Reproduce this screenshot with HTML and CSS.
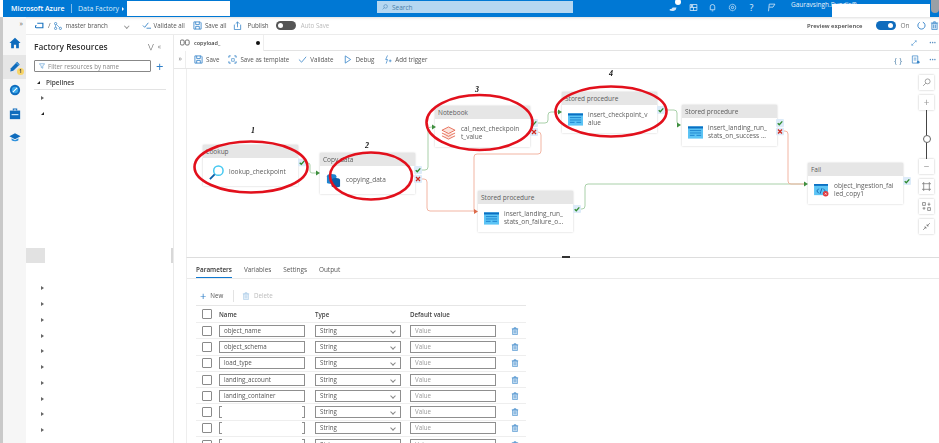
FILE: index.html
```html
<!DOCTYPE html>
<html lang="en">
<head>
    <meta charset="UTF-8">
    <title>Azure Data Factory - copyload</title>
    <link rel="stylesheet" href="styles.css">
</head>
<body>
    <!-- shared icons -->
    <svg class="defs" width="0" height="0">
        <symbol id="i-save" viewBox="0 0 10 10"><path d="M1 1h7l1 1v7H1zM3 1v3h4V1M3 9V6h4v3" fill="none" stroke="#2f7fc8" stroke-width=".9"/></symbol>
        <symbol id="i-trash" viewBox="0 0 10 10"><path d="M2 2.5h6v7H2zM1 2.2h8M4 2V.8h2V2M4 4v4M6 4v4" fill="#d6e8f7" stroke="#3a86c8" stroke-width=".8"/></symbol>
        <symbol id="i-sp" viewBox="0 0 16 13"><rect width="16" height="13" fill="#5cc4f5"/><rect width="16" height="2.2" fill="#0a6fc2"/><path d="M2 4.5h12M2 7h12M9 9.5h5M2 9.5h5" stroke="#0a6fc2" stroke-width=".8"/></symbol>
        <symbol id="ok" viewBox="0 0 8 8"><rect width="8" height="8" rx="1" fill="#dcebf9"/><path d="M1.7 4.2l1.6 1.6 3-3.4" fill="none" stroke="#2e8b2e" stroke-width="1.3"/></symbol>
        <symbol id="bad" viewBox="0 0 8 8"><rect width="8" height="8" rx="1" fill="#dcebf9"/><path d="M2 2l4 4M6 2l-4 4" fill="none" stroke="#d0281e" stroke-width="1.3"/></symbol>
    </svg>

    <header class="topbar">
        <span class="brand">Microsoft Azure</span>
        <span class="crumb">Data Factory</span>
        <span class="crumb-caret"></span>
        <span class="blank-name"></span>
        <div class="search">
            <svg class="search-icon" viewBox="0 0 10 10"><circle cx="6" cy="4" r="3" fill="none" stroke="#4d86b8"/><path d="M4 6L1 9" stroke="#4d86b8"/></svg>
            Search
        </div>
        <div class="top-icons">
            <span class="top-icon has-count">
                <svg viewBox="0 0 12 12"><path d="M1 10c2 1 6 1 8-1l1-3H5L3 8H1z" fill="#cfe4f7"/></svg>
                <b class="count"></b>
            </span>
            <span class="top-icon"><svg viewBox="0 0 12 12"><path d="M1.500 2h9v8h-9zM1.500 6h9M6 6v4" fill="none" stroke="#e4f0fb"/><rect x="2.500" y="3" width="3" height="2" fill="#e4f0fb"/></svg></span>
            <span class="top-icon"><svg viewBox="0 0 12 12"><path d="M3 9V5a3 3 0 016 0v4zM5 10.500h2" fill="none" stroke="#e4f0fb"/></svg></span>
            <span class="top-icon"><svg viewBox="0 0 12 12"><circle cx="6" cy="6" r="4.300" fill="none" stroke="#e4f0fb" stroke-width="1.100" stroke-dasharray="2 .6"/><circle cx="6" cy="6" r="1.600" fill="none" stroke="#e4f0fb"/></svg></span>
            <span class="top-icon help">?</span>
            <span class="top-icon"><svg viewBox="0 0 12 12"><path d="M3 1.500h7.500L8 5.500h-5M3 1.500L2 11" fill="none" stroke="#e4f0fb"/></svg></span>
        </div>
        <span class="user">Gauravsingh.Pundir@</span>
        <span class="blank-user"></span>
        <span class="avatar"></span>
    </header>

    <div class="app">
        <nav class="rail">
            <span class="rail-expand">&raquo;</span>
            <span class="rail-item">
                <svg viewBox="0 0 14 14"><path d="M7 1L.5 7H2.500v6h3.200V9h2.600v4h3.200V7h2z" fill="#0f6cbd"/></svg>
            </span>
            <span class="rail-item active">
                <svg viewBox="0 0 14 14"><path d="M9.500 1l3 3-7.500 7.500-3.500.7.700-3.700z" fill="#0f6cbd"/><path d="M8.500 2l3 3" stroke="#7cc4f0"/></svg>
                <b class="rail-badge">1</b>
            </span>
            <span class="rail-item">
                <svg viewBox="0 0 14 14"><circle cx="7" cy="7" r="6" fill="#0f6cbd"/><circle cx="7" cy="7" r="3.800" fill="#39a5e8"/><path d="M4.500 9.500L9.500 4.500" stroke="#fff" stroke-width="1.200"/></svg>
            </span>
            <span class="rail-item">
                <svg viewBox="0 0 14 14"><path d="M5 3V1.200h4V3" fill="none" stroke="#0f6cbd" stroke-width="1.200"/><rect x="1" y="3" width="12" height="10" fill="#0f6cbd"/><rect x="3" y="7" width="8" height="1.400" fill="#bfe0f7"/></svg>
            </span>
            <span class="rail-item">
                <svg viewBox="0 0 14 14"><path d="M7 2.500L.5 6 7 9.500 13.500 6z" fill="#0f6cbd"/><path d="M3 8.500v2.200c2 1.600 6 1.600 8 0V8.500L7 10.800z" fill="#2a8fdc"/></svg>
            </span>
        </nav>

        <div class="workspace">
            <div class="toolbar">
                <svg class="tb-icon factory" viewBox="0 0 12 12"><path d="M3 3h7.500v6H2a1.500 1.500 0 010-3" fill="none" stroke="#1a73c0" stroke-width="1.500"/></svg>
                <span class="slash">/</span>
                <svg class="tb-icon branch" viewBox="0 0 10 10"><circle cx="2" cy="2" r="1.400" fill="none" stroke="#3a86c8"/><circle cx="2" cy="8" r="1.400" fill="none" stroke="#3a86c8"/><circle cx="8" cy="8" r="1.400" fill="none" stroke="#3a86c8"/><path d="M2 3.500v3M3 3l4 4" stroke="#3a86c8" stroke-width=".8"/></svg>
                <span class="branch-name">master branch</span>
                <span class="chev"></span>
                <svg class="tb-icon validate" viewBox="0 0 10 10"><path d="M1 5l2 2 4-5M5 8h5" fill="none" stroke="#3a86c8"/></svg>
                <span class="tb-label">Validate all</span>
                <svg class="tb-icon save-all"><use href="#i-save"/></svg>
                <span class="tb-label">Save all</span>
                <svg class="tb-icon publish" viewBox="0 0 10 10"><path d="M1.500 4v5.500h7V4M5 7V1M3 3l2-2 2 2" fill="none" stroke="#3a86c8" stroke-width=".9"/></svg>
                <span class="tb-label">Publish</span>
                <span class="toggle off"></span>
                <span class="tb-label muted">Auto Save</span>
                <span class="preview">Preview experience</span>
                <span class="toggle on"></span>
                <span class="on-label">On</span>
                <svg class="tb-icon refresh" viewBox="0 0 10 10"><path d="M6.500 1.300A4 4 0 113 1.500" fill="none" stroke="#2f7fc8"/></svg>
                <svg class="tb-icon trash-top"><use href="#i-trash"/></svg>
            </div>

            <div class="work-area">
                <aside class="sidebar">
                    <div class="side-title">
                        <span>Factory Resources</span>
                        <span class="side-actions">&#8897;&nbsp;&nbsp;&laquo;</span>
                    </div>
                    <div class="filter-row">
                        <div class="filter">
                            <svg viewBox="0 0 8 8"><path d="M.5 1h7L5 4v3L3 6V4z" fill="none" stroke="#3a86c8" stroke-width=".7"/></svg>
                            Filter resources by name
                        </div>
                        <span class="add">+</span>
                    </div>
                    <div class="tree-head"><i class="tri down"></i>Pipelines</div>
                    <div class="tree-row"><i class="tri right"></i></div>
                    <div class="tree-row"><i class="tri down"></i></div>
                    <div class="tree-gap"><span class="selected"></span><span class="side-scroll"></span></div>
                    <div class="tree-row"><i class="tri right"></i></div>
                    <div class="tree-row"><i class="tri right"></i></div>
                    <div class="tree-row"><i class="tri right"></i></div>
                    <div class="tree-row"><i class="tri right"></i></div>
                    <div class="tree-row"><i class="tri right"></i></div>
                    <div class="tree-row"><i class="tri right"></i></div>
                    <div class="tree-row"><i class="tri right"></i></div>
                    <div class="tree-row"><i class="tri right"></i></div>
                    <div class="tree-row"><i class="tri right"></i></div>
                    <div class="tree-row"><i class="tri right"></i></div>
                    <div class="tree-row"><i class="tri down"></i><span class="folder"></span></div>
                </aside>

                <main class="editor">
                    <div class="tabs">
                        <div class="tab">
                            <svg class="tab-icon" viewBox="0 0 12 8"><rect x=".5" y="1" width="4.500" height="6" rx="1.500" fill="none" stroke="#555"/><rect x="6.500" y="1" width="4.500" height="6" rx="1.500" fill="none" stroke="#555"/></svg>
                            <span class="tab-name">copyload_</span>
                            <span class="dirty"></span>
                        </div>
                        <span class="tab-tools">
                            <svg class="expand" viewBox="0 0 8 8"><path d="M1 7l6-6M1 7h2M1 7V5M7 1H5M7 1v2" fill="none" stroke="#3a86c8" stroke-width=".7"/></svg>
                            <span class="more">&middot;&middot;&middot;</span>
                        </span>
                    </div>
                    <div class="commands">
                        <span class="cmd-expand">&raquo;</span>
                        <div class="cmd-list">
                            <svg class="tb-icon cmd-save"><use href="#i-save"/></svg>
                            <span class="tb-label">Save</span>
                            <svg class="tb-icon cmd-template" viewBox="0 0 10 10"><path d="M1 3V1h2M7 1h2v2M1 7v2h2M9 7v2H7" fill="none" stroke="#3a86c8"/><path d="M4 4h3v3H4z" fill="none" stroke="#3a86c8" stroke-width=".7"/></svg>
                            <span class="tb-label">Save as template</span>
                            <svg class="tb-icon cmd-validate" viewBox="0 0 10 10"><path d="M1 5l3 3 5-6" fill="none" stroke="#3a86c8" stroke-width=".9"/></svg>
                            <span class="tb-label">Validate</span>
                            <svg class="tb-icon cmd-debug" viewBox="0 0 10 10"><path d="M2.500 1l6 4-6 4z" fill="none" stroke="#3a86c8" stroke-width=".9"/></svg>
                            <span class="tb-label">Debug</span>
                            <svg class="tb-icon cmd-trigger" viewBox="0 0 10 10"><path d="M5 .5L3 5h2L3.500 9.500M6.500 6.500h3M8 5v3" fill="none" stroke="#3a86c8" stroke-width=".8"/></svg>
                            <span class="tb-label">Add trigger</span>
                            <span class="cmd-right">
                                <span class="braces">{ }</span>
                                <svg class="tb-icon doc" viewBox="0 0 10 10"><path d="M1.500 1h6v8h-6zM3 3.500h3M3 5.500h3" fill="none" stroke="#3a86c8" stroke-width=".8"/><circle cx="8" cy="8" r="1.500" fill="#3a86c8"/></svg>
                                <span class="more">&middot;&middot;&middot;</span>
                            </span>
                        </div>
                    </div>

                    <!-- pipeline canvas, node positions are the content here -->
                    <section class="canvas">
                        <div class="node n-lookup">
                            <div class="node-head">Lookup</div>
                            <div class="node-body">
                                <svg class="node-icon" viewBox="0 0 16 16"><circle cx="10" cy="6" r="5" fill="#fff" stroke="#45c8f0" stroke-width="1.600"/><path d="M6 10l-5 5" stroke="#0a5ea8" stroke-width="2"/></svg>
                                <span>lookup_checkpoint</span>
                            </div>
                        </div>
                        <div class="node n-copy">
                            <div class="node-head">Copy data</div>
                            <div class="node-body">
                                <svg class="node-icon" viewBox="0 0 16 16"><ellipse cx="6" cy="3.500" rx="5" ry="2.500" fill="#1d84d0"/><path d="M1 3.500v7c0 1.500 10 1.500 10 0v-7z" fill="#1d84d0"/><ellipse cx="10.500" cy="7.500" rx="4.500" ry="2.200" fill="#0a5ea8"/><path d="M6 7.500v6.500c0 1.500 9 1.500 9 0V7.500z" fill="#0a5ea8"/></svg>
                                <span>copying_data</span>
                            </div>
                        </div>
                        <div class="node n-notebook">
                            <div class="node-head">Notebook</div>
                            <div class="node-body">
                                <svg class="node-icon" viewBox="0 0 16 16"><path d="M8 1l7 3.500L8 8 1 4.500zM1 7.500L8 11l7-3.500M1 10.500L8 14l7-3.500" fill="#fbe3dc" stroke="#e4604a" stroke-width=".9"/></svg>
                                <span>cal_next_checkpoin<br>t_value</span>
                            </div>
                        </div>
                        <div class="node n-sp1">
                            <div class="node-head">Stored procedure</div>
                            <div class="node-body">
                                <svg class="node-icon"><use href="#i-sp"/></svg>
                                <span>insert_checkpoint_v<br>alue</span>
                            </div>
                        </div>
                        <div class="node n-sp2">
                            <div class="node-head">Stored procedure</div>
                            <div class="node-body">
                                <svg class="node-icon"><use href="#i-sp"/></svg>
                                <span>insert_landing_run_<br>stats_on_success ...</span>
                            </div>
                        </div>
                        <div class="node n-sp3">
                            <div class="node-head">Stored procedure</div>
                            <div class="node-body">
                                <svg class="node-icon"><use href="#i-sp"/></svg>
                                <span>insert_landing_run_<br>stats_on_failure_o...</span>
                            </div>
                        </div>
                        <div class="node n-fail">
                            <div class="node-head">Fail</div>
                            <div class="node-body">
                                <svg class="node-icon" viewBox="0 0 16 14"><rect width="15" height="12" fill="#5cc4f5"/><rect width="15" height="2" fill="#0a6fc2"/><path d="M5 5L3 7.500 5 10M10 5l2 2.500L10 10M8.500 4.500l-2 6" fill="none" stroke="#0a5ea8" stroke-width=".9"/><circle cx="12.500" cy="10.500" r="3" fill="#e0393e"/><path d="M11.500 9.500l2 2M13.500 9.500l-2 2" stroke="#fff" stroke-width=".7"/></svg>
                                <span>object_ingestion_fai<br>led_copy1</span>
                            </div>
                        </div>

                        <!-- viewBox uses window coordinates of the shot -->
                        <svg class="wires" viewBox="186 69 753 188">
                            <g fill="none" stroke="#a9d0a9" stroke-width="1">
                                <path d="M306 163h2q2 0 2 2v6q0 2 2 2h5"/>
                                <path d="M422 170h3q3 0 3-3v-37q0-3 3-3h3"/>
                                <path d="M537 123h8q3 0 3-3v-5q0-3 3-3h8"/>
                                <path d="M664 110h10q3 0 3 3v9q0 3 3 3"/>
                                <path d="M581 209h1q3 0 3-3v-19q0-3 3-3h216"/>
                            </g>
                            <g fill="none" stroke="#f2b5a3" stroke-width="1">
                                <path d="M422 179h2q3 0 3 3v26q0 3 3 3h44"/>
                                <path d="M537 132h1q3 0 3 3v16q0 3-3 3h-61q-3 0-3 3v55"/>
                                <path d="M784 131h1q3 0 3 3v47q0 3 3 3h13"/>
                            </g>
                            <g fill="#3f8f3f">
                                <path d="M316 170.500l4 2.500-4 2.500z"/>
                                <path d="M432 124.500l4 2.500-4 2.500z"/>
                                <path d="M558 109.500l4 2.500-4 2.500z"/>
                                <path d="M677 122.500l4 2.500-4 2.500z"/>
                                <path d="M804 181.500l4 2.500-4 2.500z"/>
                            </g>
                            <path d="M474 209l4 2.500-4 2.500z" fill="#dc6b4a"/>

                            <use href="#ok" x="298" y="158.500" width="8" height="8"/>
                            <use href="#ok" x="414" y="166" width="8" height="8"/>
                            <use href="#bad" x="414" y="175" width="8" height="8"/>
                            <use href="#ok" x="530" y="119" width="8" height="8"/>
                            <use href="#bad" x="530" y="128" width="8" height="8"/>
                            <use href="#ok" x="657" y="106" width="8" height="8"/>
                            <use href="#ok" x="776" y="119" width="8" height="8"/>
                            <use href="#bad" x="776" y="127.500" width="8" height="8"/>
                            <use href="#ok" x="573" y="205" width="8" height="8"/>
                            <use href="#ok" x="903" y="177" width="8" height="8"/>

                            <g fill="none" stroke="#e2101c" stroke-width="2.600">
                                <ellipse cx="251" cy="167" rx="56.500" ry="25.500"/>
                                <ellipse cx="371" cy="176" rx="41" ry="23.500"/>
                                <ellipse cx="479.500" cy="122.500" rx="53" ry="27.500"/>
                                <ellipse cx="611" cy="111.500" rx="55.500" ry="25"/>
                            </g>
                            <g class="marks">
                                <text x="253" y="133">1</text>
                                <text x="367" y="148">2</text>
                                <text x="477" y="92">3</text>
                                <text x="611" y="76">4</text>
                            </g>
                        </svg>

                        <div class="zoom-tools">
                            <span class="zoom-btn"><svg viewBox="0 0 8 8"><circle cx="5" cy="3" r="2.200" fill="none" stroke="#999" stroke-width=".8"/><path d="M3.400 4.600L1 7" stroke="#999" stroke-width=".8"/></svg></span>
                            <span class="zoom-btn plus">+</span>
                            <span class="zoom-slider"><i></i></span>
                            <span class="zoom-btn minus">&minus;</span>
                            <span class="zoom-btn"><svg viewBox="0 0 8 8"><path d="M1.500 1.500h5v5h-5zM0 1.500h1.500V0M6.500 0v1.500H8M0 6.500h1.500V8M8 6.500H6.500V8" fill="none" stroke="#666" stroke-width=".6"/></svg></span>
                            <span class="zoom-btn"><svg viewBox="0 0 8 8"><path d="M.5.500h2.500v2.500H.5zM5 5h2.500v2.500H5zM.5 5.500h2.500M1.800 4.500v2.500M5 2h2.500M6.200.500v3" fill="none" stroke="#666" stroke-width=".6"/></svg></span>
                            <span class="zoom-btn"><svg viewBox="0 0 8 8"><path d="M1 7l2.500-2.500M7 1L4.500 3.500M2 4.500h1.500V6M6 3.500H4.500V2" fill="none" stroke="#666" stroke-width=".6"/></svg></span>
                        </div>
                    </section>

                    <section class="panel">
                        <span class="splitter"></span>
                        <div class="panel-tabs">
                            <span class="panel-tab current">Parameters</span>
                            <span class="panel-tab">Variables</span>
                            <span class="panel-tab">Settings</span>
                            <span class="panel-tab">Output</span>
                        </div>
                        <div class="param-actions">
                            <span class="new"><b>+</b>New</span>
                            <span class="action-sep"></span>
                            <span class="delete"><svg><use href="#i-trash"/></svg>Delete</span>
                        </div>
                        <div class="param-table">
                            <div class="param-row param-head">
                                <span class="check"></span>
                                <span>Name</span>
                                <span>Type</span>
                                <span>Default value</span>
                                <span></span>
                            </div>
                            <div class="param-row">
                                <span class="check"></span><span class="field">object_name</span>
                                <span class="field select">String</span><span class="field value">Value</span>
                                <svg class="row-trash"><use href="#i-trash"/></svg>
                            </div>
                            <div class="param-row">
                                <span class="check"></span><span class="field">object_schema</span>
                                <span class="field select">String</span><span class="field value">Value</span>
                                <svg class="row-trash"><use href="#i-trash"/></svg>
                            </div>
                            <div class="param-row">
                                <span class="check"></span><span class="field">load_type</span>
                                <span class="field select">String</span><span class="field value">Value</span>
                                <svg class="row-trash"><use href="#i-trash"/></svg>
                            </div>
                            <div class="param-row">
                                <span class="check"></span><span class="field">landing_account</span>
                                <span class="field select">String</span><span class="field value">Value</span>
                                <svg class="row-trash"><use href="#i-trash"/></svg>
                            </div>
                            <div class="param-row">
                                <span class="check"></span><span class="field">landing_container</span>
                                <span class="field select">String</span><span class="field value">Value</span>
                                <svg class="row-trash"><use href="#i-trash"/></svg>
                            </div>
                            <div class="param-row">
                                <span class="check"></span><span class="field masked"></span>
                                <span class="field select">String</span><span class="field value">Value</span>
                                <svg class="row-trash"><use href="#i-trash"/></svg>
                            </div>
                            <div class="param-row">
                                <span class="check"></span><span class="field masked"></span>
                                <span class="field select">String</span><span class="field value">Value</span>
                                <svg class="row-trash"><use href="#i-trash"/></svg>
                            </div>
                            <div class="param-row">
                                <span class="check"></span><span class="field masked"></span>
                                <span class="field select">String</span><span class="field value">Value</span>
                                <svg class="row-trash"><use href="#i-trash"/></svg>
                            </div>
                        </div>
                    </section>
                </main>
            </div>
        </div>
    </div>
</body>
</html>
```

FILE: styles.css
```css
* {
    margin: 0;
    padding: 0;
    box-sizing: border-box;
}

html, body {
    width: 939px;
    height: 443px;
    overflow: hidden;
}

body {
    background: #fff;
    color: #444;
    font-family: "Open Sans", "Noto Sans", "Liberation Sans", sans-serif;
    font-size: 7px;
    display: flex;
    flex-direction: column;
    filter: blur(0.45px);
}

.defs {
    position: absolute;
}

/* top blue bar */
.topbar {
    height: 17px;
    margin-left: 3px;
    background: #0078d4;
    color: #fff;
    display: flex;
    align-items: center;
    flex: none;
    position: relative;
}

.brand {
    margin-left: 8px;
    font-size: 7px;
    font-weight: 600;
    width: 61px;
    height: 9px;
    line-height: 9px;
    border-right: 1px solid #7fbbe9;
}

.crumb {
    margin-left: 6px;
    width: 44px;
    color: #dcecf9;
    font-size: 7px;
}

.crumb-caret {
    border-left: 2.500px solid #fff;
    border-top: 2px solid transparent;
    border-bottom: 2px solid transparent;
}

.blank-name {
    margin-left: 3px;
    width: 103px;
    height: 15px;
    background: #fff;
}

.search {
    margin-left: 147px;
    width: 196px;
    height: 12px;
    margin-top: -3px;
    background: #b5d7f1;
    color: #4a7ea8;
    font-size: 6.5px;
    display: flex;
    align-items: center;
    padding-left: 5px;
    gap: 4px;
}

.search-icon {
    width: 6px;
    height: 6px;
}

.top-icons {
    margin-left: 96px;
    display: flex;
    gap: 10.500px;
    margin-top: -3px;
}

.top-icon {
    width: 9px;
    height: 9px;
    position: relative;
    display: block;
    font-size: 9px;
    line-height: 9px;
    text-align: center;
    color: #e4f0fb;
}

.top-icon svg {
    display: block;
    width: 9px;
    height: 9px;
}

.count {
    position: absolute;
    top: -4px;
    right: -3px;
    width: 6px;
    height: 6px;
    border-radius: 50%;
    background: #fff;
}

.user {
    position: absolute;
    left: 788px;
    top: 0;
    font-size: 6.5px;
    line-height: 9px;
    color: #e8f2fb;
}

.blank-user {
    position: absolute;
    left: 829px;
    top: 4px;
    width: 98px;
    height: 13px;
    background: #fff;
}

.avatar {
    position: absolute;
    right: 0;
    top: 0;
    width: 8px;
    height: 13px;
    border-radius: 0 0 4px 4px;
    background: #9aa0a6;
}

/* rail + workspace */
.app {
    flex: 1;
    display: flex;
    min-height: 0;
}

.rail {
    width: 26px;
    flex: none;
    background: #f6f6f6;
    border-left: 3px solid #c9c9c9;
    display: flex;
    flex-direction: column;
    align-items: stretch;
}

.rail-expand {
    height: 14.500px;
    line-height: 14px;
    text-align: right;
    padding-right: 3px;
    font-size: 7px;
    color: #666;
}

.rail-item {
    height: 23.500px;
    position: relative;
    display: flex;
    align-items: center;
    justify-content: center;
}

.rail-item svg {
    width: 12px;
    height: 12px;
}

.rail-item.active {
    background: #e6e6e6;
}

.rail-badge {
    position: absolute;
    left: 14px;
    top: 13px;
    width: 7px;
    height: 7px;
    border-radius: 50%;
    background: #f8d568;
    color: #444;
    font-size: 4.500px;
    line-height: 7px;
    text-align: center;
}

.workspace {
    flex: 1;
    display: flex;
    flex-direction: column;
    min-width: 0;
}

.toolbar {
    height: 18px;
    flex: none;
    display: flex;
    align-items: center;
    padding-left: 9px;
    border-bottom: 1px solid #ececec;
    box-shadow: inset 0 4px 3px -3px #ddd;
}

.tb-icon {
    width: 9px;
    height: 9px;
    flex: none;
}

.tb-label {
    font-size: 6.200px;
    color: #555;
    white-space: nowrap;
}

.tb-label.muted {
    color: #bbb;
    margin-left: 5px;
}

.slash {
    margin-left: 4px;
    color: #666;
}

.branch {
    margin-left: 3px;
    width: 8px;
    height: 8px;
}

.branch-name {
    margin-left: 4px;
    width: 59px;
    color: #555;
    font-size: 6.200px;
}

.chev {
    width: 3.500px;
    height: 3.500px;
    border-right: 1px solid #999;
    border-bottom: 1px solid #999;
    transform: rotate(45deg);
}

.validate {
    margin-left: 13.500px;
    margin-right: 3px;
}

.save-all {
    margin-left: 8px;
    margin-right: 3px;
}

.publish {
    margin-left: 7px;
    margin-right: 5px;
}

.toggle {
    width: 20px;
    height: 9px;
    border-radius: 5px;
    position: relative;
    flex: none;
}

.toggle::after {
    content: "";
    position: absolute;
    top: 2px;
    width: 5px;
    height: 5px;
    border-radius: 50%;
    background: #fff;
}

.toggle.off {
    margin-left: 7px;
    background: #555;
}

.toggle.off::after {
    left: 2px;
}

.toggle.on {
    margin-left: 14px;
    background: #0f6cbd;
}

.toggle.on::after {
    right: 3px;
}

.preview {
    margin-left: auto;
    font-weight: 600;
    font-size: 5.900px;
    color: #444;
}

.on-label {
    margin-left: 4px;
    color: #777;
    font-size: 6.500px;
}

.refresh {
    margin-left: 7.500px;
}

.trash-top {
    margin-left: 4px;
}

.work-area {
    flex: 1;
    display: flex;
    min-height: 0;
}

/* factory resources */
.sidebar {
    width: 148px;
    flex: none;
    padding: 4px 0 0 8px;
    border-right: 1px solid #eaeaea;
    position: relative;
}

.side-title {
    display: flex;
    justify-content: space-between;
    align-items: center;
    height: 15px;
    padding-right: 12px;
    font-size: 8.400px;
    font-weight: 600;
    color: #333;
}

.side-actions {
    font-size: 6.500px;
    font-weight: 400;
    color: #777;
}

.filter-row {
    display: flex;
    align-items: center;
    margin-top: 6px;
    gap: 5px;
}

.filter {
    width: 117px;
    height: 12px;
    border: 1px solid #888;
    border-radius: 1px;
    display: flex;
    align-items: center;
    gap: 3px;
    padding-left: 4px;
    font-size: 6.200px;
    color: #888;
}

.filter svg {
    width: 6px;
    height: 6px;
}

.add {
    font-size: 13px;
    line-height: 12px;
    color: #2f7fc8;
}

.tree-head {
    margin-top: 4px;
    margin-right: 7px;
    height: 14px;
    padding-left: 3px;
    display: flex;
    align-items: center;
    gap: 6px;
    border-bottom: 1px solid #e3e3e3;
    font-weight: 600;
    font-size: 6.500px;
}

.tree-row {
    height: 15.750px;
    display: flex;
    align-items: center;
    padding-left: 7px;
    gap: 7px;
}

.tri {
    display: block;
    flex: none;
}

.tri.right {
    border-left: 3px solid #666;
    border-top: 2.500px solid transparent;
    border-bottom: 2.500px solid transparent;
}

.tri.down {
    border-right: 3.500px solid #222;
    border-top: 3.500px solid transparent;
}

.tree-gap {
    height: 159px;
    margin-left: -8px;
    position: relative;
}

.selected {
    position: absolute;
    left: 0;
    top: 126px;
    width: 19px;
    height: 15px;
    background: #e2e2e2;
}

.side-scroll {
    position: absolute;
    right: 0;
    top: 126px;
    width: 2px;
    height: 15px;
    background: #d8d8d8;
}

.folder {
    width: 7px;
    height: 5px;
    background: #999;
}

/* editor */
.editor {
    flex: 1;
    min-width: 0;
    display: flex;
    flex-direction: column;
}

.tabs {
    height: 16px;
    flex: none;
    display: flex;
    align-items: center;
    justify-content: space-between;
    border-bottom: 1px solid #e3e3e3;
}

.tab {
    width: 90px;
    height: 16px;
    display: flex;
    align-items: center;
    padding-left: 6px;
    border-right: 1px solid #eee;
    background: #fff;
}

.tab-icon {
    width: 10px;
    height: 7px;
}

.tab-name {
    margin-left: 4px;
    font-size: 5.500px;
    font-weight: 600;
    color: #444;
    width: 62px;
}

.dirty {
    width: 4px;
    height: 4px;
    border-radius: 50%;
    background: #111;
}

.tab-tools,
.cmd-right {
    display: flex;
    align-items: center;
    gap: 12px;
    padding-right: 3px;
}

.expand {
    width: 6px;
    height: 6px;
}

.more {
    font-size: 8px;
    line-height: 8px;
    color: #5a8fc0;
    font-weight: 700;
}

.commands {
    height: 18px;
    flex: none;
    display: flex;
    border-bottom: 1px solid #e6e6e6;
}

.cmd-expand {
    width: 12px;
    flex: none;
    text-align: right;
    padding-right: 3px;
    border-right: 1px solid #eee;
    line-height: 16px;
    font-size: 7px;
    color: #777;
}

.cmd-list {
    flex: 1;
    display: flex;
    align-items: center;
    padding-left: 8px;
}

.cmd-list .tb-icon {
    margin-right: 3px;
}

.cmd-template {
    margin-left: 9px;
}

.cmd-validate {
    margin-left: 9px;
}

.cmd-debug {
    margin-left: 10px;
}

.cmd-trigger {
    margin-left: 9px;
}

.cmd-right {
    margin-left: auto;
    gap: 9px;
}

.cmd-list .doc {
    margin-right: 0;
}

.braces {
    font-size: 8px;
    color: #4a7ea8;
}

/* pipeline canvas */
.canvas {
    height: 188px;
    flex: none;
    margin-left: 12px;
    position: relative;
    border-left: 1px solid #eee;
}

.wires {
    position: absolute;
    left: -1px;
    top: 0;
    width: 753px;
    height: 188px;
    overflow: visible;
    pointer-events: none;
}

.marks text {
    font-family: "Liberation Serif", serif;
    font-size: 8px;
    font-weight: 700;
    font-style: italic;
    fill: #111;
    text-anchor: middle;
}

.node {
    position: absolute;
    width: 95px;
    height: 41px;
    background: #fff;
    box-shadow: 0 0 2px rgba(0, 0, 0, 0.2);
    font-size: 6.500px;
    line-height: 8px;
    color: #5c5c5c;
}

.node-head {
    height: 13px;
    line-height: 13px;
    background: #e6e6e6;
    padding-left: 3px;
    font-size: 6.500px;
    color: #5c5c5c;
}

.node-body {
    height: 28px;
    display: flex;
    align-items: center;
    padding-left: 6px;
    gap: 5px;
    white-space: nowrap;
}

.node-icon {
    width: 15px;
    height: 13px;
    flex: none;
}

.n-lookup {
    left: 16px;
    top: 76px;
}

.n-lookup .node-icon,
.n-copy .node-icon,
.n-notebook .node-icon {
    height: 15px;
}

.n-copy {
    left: 133px;
    top: 84px;
}

.n-notebook {
    left: 248px;
    top: 37px;
}

.n-sp1 {
    left: 375px;
    top: 23px;
}

.n-sp2 {
    left: 495px;
    top: 36px;
}

.n-sp3 {
    left: 291px;
    top: 122px;
}

.n-fail {
    left: 621px;
    top: 94px;
}

.zoom-tools {
    position: absolute;
    right: 5px;
    top: 5.500px;
    width: 15px;
    display: flex;
    flex-direction: column;
    align-items: center;
    gap: 5px;
}

.zoom-btn {
    width: 15px;
    height: 15px;
    background: #fff;
    box-shadow: 0 0 2px rgba(0, 0, 0, 0.25);
    display: flex;
    align-items: center;
    justify-content: center;
    color: #999;
    font-size: 10px;
    line-height: 15px;
}

.zoom-btn svg {
    width: 9px;
    height: 9px;
}

.zoom-slider {
    width: 1px;
    height: 49px;
    margin: -5px 0;
    background: #444;
    position: relative;
}

.zoom-slider i {
    position: absolute;
    left: -3.500px;
    top: 25px;
    width: 8px;
    height: 8px;
    border-radius: 50%;
    background: #fff;
    border: 1px solid #666;
}

/* bottom panel */
.panel {
    flex: 1;
    min-height: 0;
    margin-left: 12px;
    position: relative;
    border-top: 1px solid #ddd;
    border-left: 1px solid #eee;
}

.splitter {
    position: absolute;
    left: 375px;
    top: -2px;
    width: 8px;
    height: 2px;
    background: #333;
}

.panel-tabs {
    height: 21px;
    padding-left: 9px;
    display: flex;
    align-items: flex-end;
    gap: 12px;
    border-bottom: 1px solid #eaeaea;
}

.panel-tab {
    height: 14px;
    font-size: 6.400px;
    line-height: 11px;
    color: #555;
}

.panel-tab.current {
    color: #333;
    font-weight: 600;
    border-bottom: 1.500px solid #0f78d0;
}

.param-actions {
    height: 26px;
    padding-top: 7px;
    margin-left: 9px;
    display: flex;
    align-items: center;
    color: #555;
    font-size: 6.200px;
}

.new {
    display: flex;
    align-items: center;
    gap: 4px;
    padding-left: 4px;
    width: 37px;
}

.new b {
    font-size: 11px;
    line-height: 10px;
    font-weight: 400;
    color: #2f7fc8;
}

.action-sep {
    width: 1px;
    height: 12px;
    background: #e3e3e3;
}

.delete {
    display: flex;
    align-items: center;
    gap: 4px;
    margin-left: 8px;
    color: #bbb;
}

.delete svg {
    width: 8px;
    height: 8px;
    opacity: 0.45;
}

.param-table {
    margin-left: 9px;
    width: 330px;
    border-top: 1px solid #e6e6e6;
}

.param-row {
    display: grid;
    grid-template-columns: 23px 96px 95px 96px 19px;
    align-items: center;
    height: 16.300px;
    border-bottom: 1px solid #eee;
}

.param-head {
    height: 17px;
    font-weight: 600;
    color: #444;
    font-size: 6.200px;
}

.check {
    width: 10px;
    height: 10px;
    margin-left: 6px;
    border: 1px solid #8a8a8a;
    border-radius: 1px;
}

.field {
    width: 86px;
    height: 12px;
    line-height: 10px;
    padding-left: 4px;
    border: 1px solid #8f8f8f;
    font-size: 6.200px;
    color: #555;
    position: relative;
}

.field.value {
    color: #999;
}

.field.select::after {
    content: "";
    position: absolute;
    right: 5px;
    top: 3px;
    width: 3px;
    height: 3px;
    border-right: 1px solid #888;
    border-bottom: 1px solid #888;
    transform: rotate(45deg);
}

/* names blanked out in the shot */
.field.masked::before {
    content: "";
    position: absolute;
    left: 2px;
    right: 2px;
    top: -1px;
    bottom: -1px;
    background: #fff;
}

.row-trash {
    width: 8px;
    height: 8px;
    margin-left: 5px;
}
```
